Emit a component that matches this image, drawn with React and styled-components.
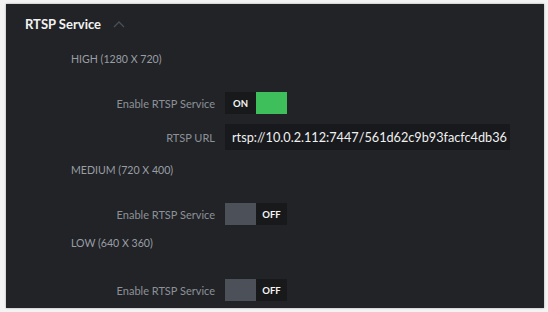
import React from "react";
import styled, { createGlobalStyle } from "styled-components";

const Global = createGlobalStyle`
  html, body {
    margin: 0;
    padding: 0;
    background: #f3f3f3;
  }
  body {
    font-family: Lato, "Open Sans", sans-serif;
  }
`;

const Page = styled.div`
  width: 548px;
  height: 312px;
  padding: 4px 4px 4px 6px;
  box-sizing: border-box;
`;

const Panel = styled.div`
  height: 304px;
  background: #212327;
  box-shadow: 0 0 2px rgba(0, 0, 0, 0.35);
  padding-top: 10px;
  box-sizing: border-box;
  overflow: hidden;
`;

const Header = styled.div`
  display: flex;
  align-items: center;
  gap: 12px;
  height: 20px;
  padding-left: 19px;
  color: #f2f2f2;
  font-size: 13px;
  font-weight: 700;
`;

const GroupTitle = styled.div`
  margin-top: ${(p) => p.$top}px;
  padding-left: 65px;
  height: 16px;
  line-height: 16px;
  font-size: 10.6px;
  color: #9a9ea4;
`;

const Row = styled.div`
  display: flex;
  align-items: center;
  gap: 10px;
  margin-top: ${(p) => p.$top}px;
`;

const Label = styled.div`
  width: 209px;
  text-align: right;
  font-size: 11px;
  color: #8d9197;
`;

const Toggle = styled.div`
  display: flex;
  height: 22px;
  width: 62px;
`;

const Part = styled.div`
  flex: 1;
  display: flex;
  align-items: center;
  justify-content: center;
  font-size: 9.5px;
  font-weight: 700;
  color: #f4f4f4;
  background: ${(p) => p.$bg};
`;

const UrlField = styled.div`
  width: 278px;
  height: 26px;
  background: #17191c;
  display: flex;
  align-items: center;
  padding-left: 7px;
  font-size: 12.7px;
  color: #f0f0f0;
  overflow: hidden;
  white-space: nowrap;
`;

const Chevron = () => (
  <svg width="12" height="8" viewBox="0 0 12 8">
    <path d="M1 7 L6 2 L11 7" fill="none" stroke="#4a4e55" strokeWidth="1.3" />
  </svg>
);

const Switch = ({ on }) => (
  <Toggle>
    {on ? (
      <>
        <Part $bg="#17191b">ON</Part>
        <Part $bg="#3fbe5c" />
      </>
    ) : (
      <>
        <Part $bg="#4c5058" />
        <Part $bg="#17191b">OFF</Part>
      </>
    )}
  </Toggle>
);

export default function App() {
  return (
    <>
      <Global />
      <Page>
        <Panel>
          <Header>
            RTSP Service
            <Chevron />
          </Header>

          <GroupTitle $top={17}>HIGH (1280 X 720)</GroupTitle>
          <Row $top={25}>
            <Label>Enable RTSP Service</Label>
            <Switch on />
          </Row>
          <Row $top={10}>
            <Label>RTSP URL</Label>
            <UrlField>rtsp://10.0.2.112:7447/561d62c9b93facfc4db36</UrlField>
          </Row>

          <GroupTitle $top={12}>MEDIUM (720 X 400)</GroupTitle>
          <Row $top={25}>
            <Label>Enable RTSP Service</Label>
            <Switch />
          </Row>

          <GroupTitle $top={10}>LOW (640 X 360)</GroupTitle>
          <Row $top={28}>
            <Label>Enable RTSP Service</Label>
            <Switch />
          </Row>
        </Panel>
      </Page>
    </>
  );
}
